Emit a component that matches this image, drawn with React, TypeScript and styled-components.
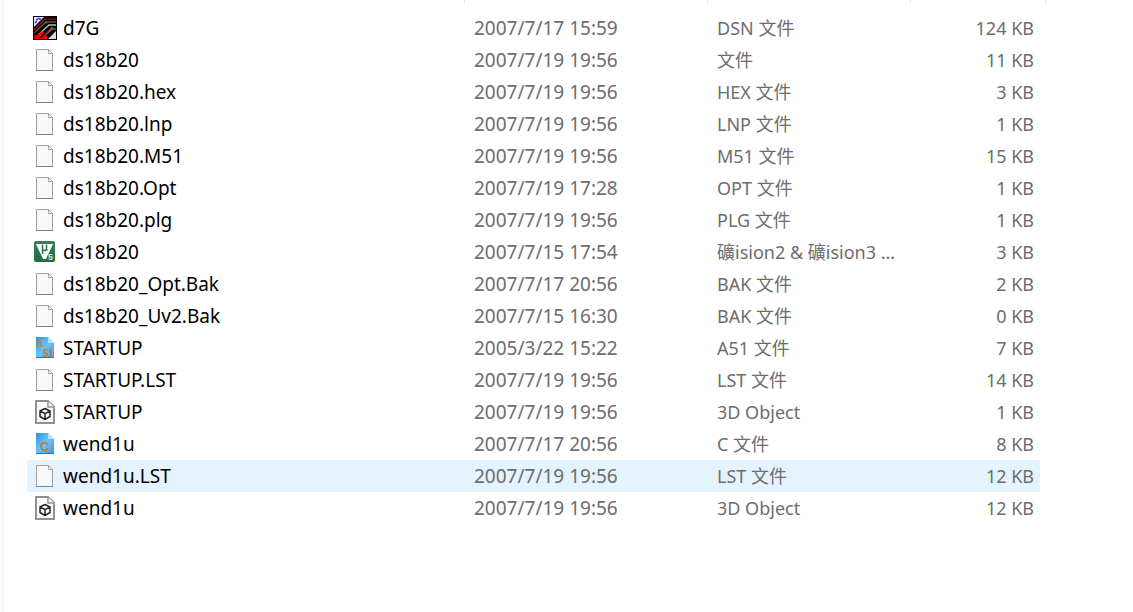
import React from "react";
import styled, { createGlobalStyle } from "styled-components";

const GlobalStyle = createGlobalStyle`
  * { box-sizing: border-box; }
  body {
    margin: 0;
    background: #ffffff;
    font-family: "Noto Sans", "Noto Sans CJK SC", sans-serif;
    font-size: 19px;
    color: #000000;
  }
`;

const Pane = styled.main`
  min-height: 100vh;
  margin-left: 2px;
  padding: 0 93px 0 23px;
  border-left: 2px solid #f5f5f5;
`;

const ColumnEdges = styled.div`
  display: grid;
  grid-template-columns: 1fr 243px 203px 135px;
  height: 3px;
  margin: 0 -6px 9px 0;
`;

const Edge = styled.span`
  border-right: 1px solid #e2e2e2;
`;

const FileTable = styled.table`
  width: 100%;
  table-layout: fixed;
  border-collapse: collapse;
`;

const Column = styled.col<{ $width?: number }>`
  width: ${({ $width }) => ($width ? `${$width}px` : "auto")};
`;

const Row = styled.tr<{ $selected?: boolean }>`
  height: 32px;
  background: ${({ $selected }) => ($selected ? "#e5f3ff" : "transparent")};
`;

const NameCell = styled.th`
  padding: 0 6px;
  font-weight: 400;
  text-align: left;
`;

const NameContent = styled.div`
  display: flex;
  align-items: center;
  gap: 6px;
  height: 32px;
  line-height: 32px;
  white-space: nowrap;
`;

const Cell = styled.td`
  padding: 0 10px;
  color: #6d6d6d;
  line-height: 32px;
  white-space: nowrap;
`;

const TypeCell = styled(Cell)`
  font-size: 18px;
`;

const SizeCell = styled(Cell)`
  padding: 0 6px;
  font-size: 18px;
  text-align: right;
`;

const Icon = styled.svg.attrs({ viewBox: "0 0 24 24", "aria-hidden": true })`
  flex: none;
  width: 24px;
  height: 24px;
  font-family: "Liberation Sans", sans-serif;
  font-weight: 700;
`;

const PageIcon = () => (
  <Icon>
    <path d="M3.5 1.5H15L19.5 6V22.5H3.5Z" fill="#f8f9fa" stroke="#a0a0a0" />
    <path d="M3 22.5H20" stroke="#858585" />
    <path d="M15.5 1.5V5.5H19.5Z" fill="#ffffff" stroke="#a0a0a0" />
  </Icon>
);

const BoardIcon = () => (
  <Icon>
    <rect width="24" height="24" fill="#000" />
    <path d="M1 1H11L1 11Z" fill="#e8e8ff" />
    <path d="M3 4l3-2M2 7l2-2M6 3h2" stroke="#2432e8" strokeWidth="1.4" />
    <path d="M1 14L12 3H23" stroke="#d80000" strokeWidth="1.2" fill="none" />
    <path d="M1 17L13 6H23" stroke="#555" strokeWidth="1.4" fill="none" />
    <path d="M4 20L16 9H23" stroke="#bcbcbc" strokeWidth="1.4" fill="none" />
    <path d="M11 20L19 13H23" stroke="#8c8c8c" strokeWidth="1.2" fill="none" />
    <path d="M1 18H6L9 15L11 17L10 20H14V23H1Z" fill="#ee0000" />
    <path d="M11 20L18 12" stroke="#e00000" strokeWidth="1.2" />
    <path d="M1 20L7 15M7 22L13 16" stroke="#000" strokeWidth="1.1" />
    <path d="M23 15V23H15Z" fill="#d9d9d9" />
    <path d="M12 6.5h2M18 12h2" stroke="#00c030" strokeWidth="1.4" />
    <rect x=".5" y=".5" width="23" height="23" fill="none" stroke="#000" />
  </Icon>
);

const ProjectIcon = () => (
  <Icon>
    <defs>
      <linearGradient id="projectGreen" x1="0" y1="0" x2="0" y2="1">
        <stop offset="0" stopColor="#35815a" />
        <stop offset="1" stopColor="#246a40" />
      </linearGradient>
    </defs>
    <rect x="1" y="1" width="21" height="21" rx="2" fill="url(#projectGreen)" />
    <path d="M3 4H20L13 19H10Z" fill="#fff" />
    <path
      d="M9.5 4.5V14M9.5 9.5Q11.5 11.5 13.5 9.5V4.5M13.5 9.5L14.5 10.5"
      stroke="#2b774a"
      strokeWidth="1.5"
      fill="none"
    />
    <text x="15" y="20" fontSize="9" fill="#d6ecdc">5</text>
  </Icon>
);

const SourceIcon = ({ kind }: { kind: "a51" | "c" }) => (
  <Icon>
    <defs>
      <linearGradient id={`source-${kind}`} x1="0" y1="0" x2="1" y2="1">
        <stop offset="0" stopColor="#2f8fe0" />
        <stop offset=".5" stopColor="#6fc3fa" />
        <stop offset="1" stopColor="#3d94e4" />
      </linearGradient>
    </defs>
    <path d="M3 1H15L21 7V22H3Z" fill={`url(#source-${kind})`} />
    <path d="M15 1V7H21Z" fill="#b9e2ff" />
    <path d="M3 21.5H21" stroke="#2872bd" />
    {kind === "a51" ? (
      <>
        <text x="3" y="11" fontSize="12" fill="#bd8742">a</text>
        <text x="10" y="21" fontSize="10" fill="#cc7a1e">51</text>
      </>
    ) : (
      <text x="7" y="19" fontSize="13" fill="#cc7a1e">C</text>
    )}
  </Icon>
);

const ObjectIcon = () => (
  <Icon>
    <path d="M3 1H15L21 7V23H3Z" fill="#fafafa" stroke="#909090" strokeWidth="2" />
    <path d="M15 1V7H21" fill="#fff" stroke="#909090" strokeWidth="1.5" />
    <path
      d="M12 8.5L17 11V16.5L12 19.5L7 16.5V11ZM7 11L12 13.7L17 11M12 13.7V19.5"
      fill="none"
      stroke="#262626"
      strokeWidth="1.5"
      strokeLinejoin="round"
    />
  </Icon>
);

const icons = {
  page: <PageIcon />,
  board: <BoardIcon />,
  project: <ProjectIcon />,
  a51: <SourceIcon kind="a51" />,
  c: <SourceIcon kind="c" />,
  object: <ObjectIcon />,
};

interface FileEntry {
  icon: keyof typeof icons;
  name: string;
  date: string;
  type: string;
  size: string;
  selected?: boolean;
}

const files: FileEntry[] = [
  { icon: "board", name: "d7G", date: "2007/7/17 15:59", type: "DSN 文件", size: "124 KB" },
  { icon: "page", name: "ds18b20", date: "2007/7/19 19:56", type: "文件", size: "11 KB" },
  { icon: "page", name: "ds18b20.hex", date: "2007/7/19 19:56", type: "HEX 文件", size: "3 KB" },
  { icon: "page", name: "ds18b20.lnp", date: "2007/7/19 19:56", type: "LNP 文件", size: "1 KB" },
  { icon: "page", name: "ds18b20.M51", date: "2007/7/19 19:56", type: "M51 文件", size: "15 KB" },
  { icon: "page", name: "ds18b20.Opt", date: "2007/7/19 17:28", type: "OPT 文件", size: "1 KB" },
  { icon: "page", name: "ds18b20.plg", date: "2007/7/19 19:56", type: "PLG 文件", size: "1 KB" },
  { icon: "project", name: "ds18b20", date: "2007/7/15 17:54", type: "礦ision2 & 礦ision3 ...", size: "3 KB" },
  { icon: "page", name: "ds18b20_Opt.Bak", date: "2007/7/17 20:56", type: "BAK 文件", size: "2 KB" },
  { icon: "page", name: "ds18b20_Uv2.Bak", date: "2007/7/15 16:30", type: "BAK 文件", size: "0 KB" },
  { icon: "a51", name: "STARTUP", date: "2005/3/22 15:22", type: "A51 文件", size: "7 KB" },
  { icon: "page", name: "STARTUP.LST", date: "2007/7/19 19:56", type: "LST 文件", size: "14 KB" },
  { icon: "object", name: "STARTUP", date: "2007/7/19 19:56", type: "3D Object", size: "1 KB" },
  { icon: "c", name: "wend1u", date: "2007/7/17 20:56", type: "C 文件", size: "8 KB" },
  { icon: "page", name: "wend1u.LST", date: "2007/7/19 19:56", type: "LST 文件", size: "12 KB", selected: true },
  { icon: "object", name: "wend1u", date: "2007/7/19 19:56", type: "3D Object", size: "12 KB" },
];

export default function App() {
  return (
    <>
      <GlobalStyle />
      <Pane>
        <ColumnEdges>
          <Edge />
          <Edge />
          <Edge />
          <Edge />
        </ColumnEdges>
        <FileTable>
          <colgroup>
            <Column />
            <Column $width={243} />
            <Column $width={203} />
            <Column $width={130} />
          </colgroup>
          <tbody>
            {files.map((file, index) => (
              <Row key={index} $selected={file.selected}>
                <NameCell scope="row">
                  <NameContent>
                    {icons[file.icon]}
                    {file.name}
                  </NameContent>
                </NameCell>
                <Cell>{file.date}</Cell>
                <TypeCell>{file.type}</TypeCell>
                <SizeCell>{file.size}</SizeCell>
              </Row>
            ))}
          </tbody>
        </FileTable>
      </Pane>
    </>
  );
}
